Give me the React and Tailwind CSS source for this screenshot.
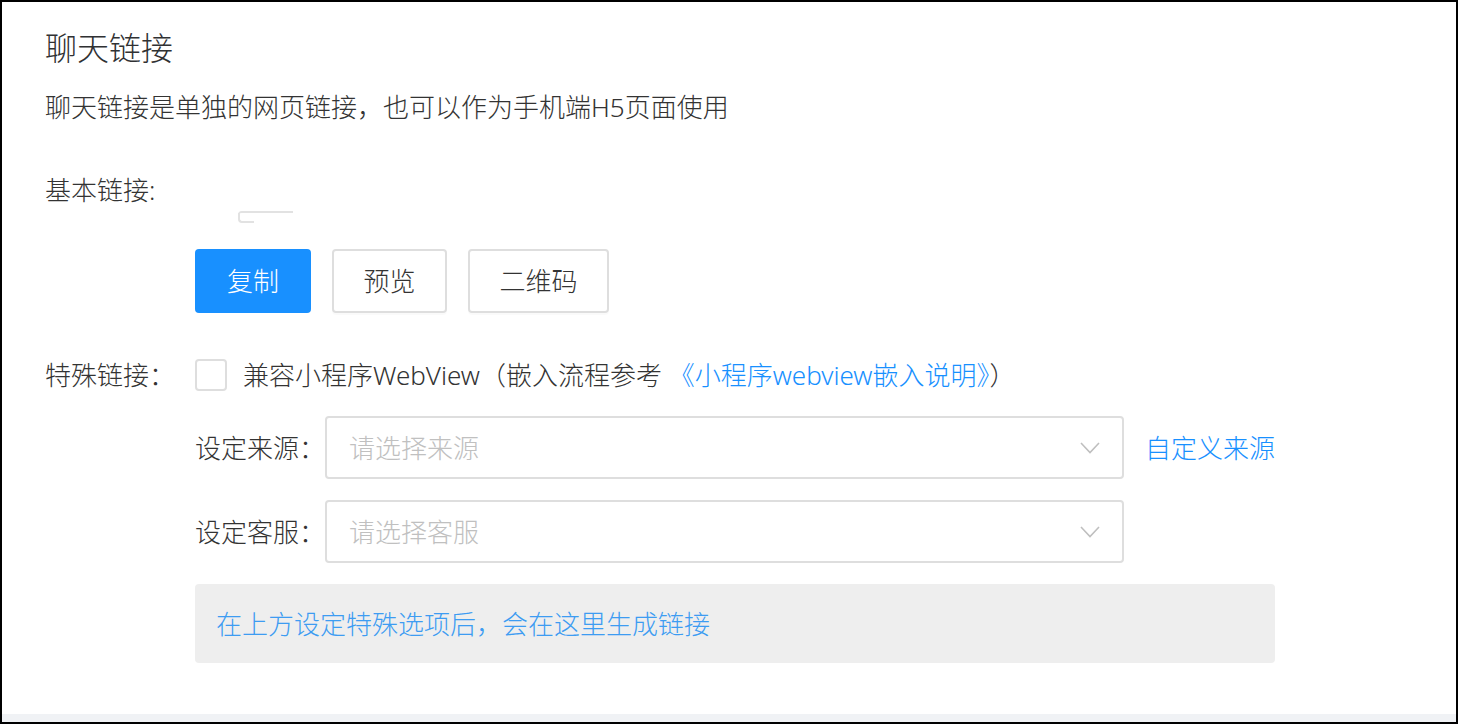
import { useState } from "react";

const font = { fontFamily: '"Noto Sans", "Noto Sans CJK SC", sans-serif' };

function Chevron() {
  return (
    <svg width="20" height="12" viewBox="0 0 20 12" fill="none">
      <polyline points="1,1 10,10.5 19,1" stroke="#bfbfbf" strokeWidth="1.6" />
    </svg>
  );
}

function SelectRow({ label, placeholder, extra }) {
  return (
    <div className="flex items-center">
      <div className="w-[130px] text-[26px] text-[#333]">{label}</div>
      <div className="w-[799px] h-[63px] border-2 border-[#dedede] rounded-[4px] flex items-center justify-between pl-[22px] pr-[22px]">
        <span className="text-[26px] text-[#c0c0c0]">{placeholder}</span>
        <Chevron />
      </div>
      {extra && <a className="ml-[21px] text-[26px] text-[#1890ff] cursor-pointer">{extra}</a>}
    </div>
  );
}

export default function App() {
  const [compat, setCompat] = useState(false);

  return (
    <div className="w-[1458px] h-[724px] border-2 border-black bg-[#f0f2f5] flex flex-col font-light" style={font}>
      <div className="h-[712px] bg-white pl-[43px] pt-[26px] leading-[36px]">
        <h1 className="text-[32px] leading-[40px] text-[#303133]">聊天链接</h1>
        <p className="mt-[21px] text-[26px] text-[#333]">聊天链接是单独的网页链接，也可以作为手机端H5页面使用</p>

        <div className="mt-[47px] text-[26px] text-[#333]">基本链接:</div>
        <div className="ml-[150px]">
          <div className="ml-[43px] mt-[3px] w-[55px] h-[12px] border-t-2 border-[#e2e2e2] rounded-tl-[4px]">
            <div className="w-[16px] h-[10px] border-l-2 border-b-2 border-[#e2e2e2] rounded-bl-[4px]" />
          </div>
          <div className="mt-[26px] flex gap-[21px]">
            <button className="w-[116px] h-[64px] rounded-[4px] bg-[#1890ff] text-white text-[26px]">复制</button>
            <button className="w-[115px] h-[64px] rounded-[4px] border-2 border-[#dedede] text-[#333] text-[26px] shadow-[0_2px_0_rgba(0,0,0,0.02)]">预览</button>
            <button className="w-[141px] h-[64px] rounded-[4px] border-2 border-[#dedede] text-[#333] text-[26px] shadow-[0_2px_0_rgba(0,0,0,0.02)]">二维码</button>
          </div>
        </div>

        <div className="mt-[44px] flex items-center h-[36px]">
          <div className="w-[150px] text-[26px] text-[#333]">特殊链接：</div>
          <button
            onClick={() => setCompat(!compat)}
            className={`w-[32px] h-[32px] rounded-[4px] border-2 ${compat ? "border-[#1890ff] bg-[#1890ff]" : "border-[#dedede] bg-white"}`}
          />
          <span className="ml-[16px] text-[26px] text-[#333]">
            兼容小程序WebView（嵌入流程参考 <a className="text-[#1890ff] cursor-pointer">《小程序webview嵌入说明》</a>）
          </span>
        </div>

        <div className="ml-[150px]">
          <div className="mt-[23px]">
            <SelectRow label="设定来源：" placeholder="请选择来源" extra="自定义来源" />
          </div>
          <div className="mt-[21px]">
            <SelectRow label="设定客服：" placeholder="请选择客服" />
          </div>
          <div className="mt-[21px] w-[1080px] h-[79px] rounded-[4px] bg-[#eeeeee] flex items-center pl-[21px]">
            <span className="text-[26px] text-[#3d9cf2]">在上方设定特殊选项后，会在这里生成链接</span>
          </div>
        </div>
      </div>
    </div>
  );
}
